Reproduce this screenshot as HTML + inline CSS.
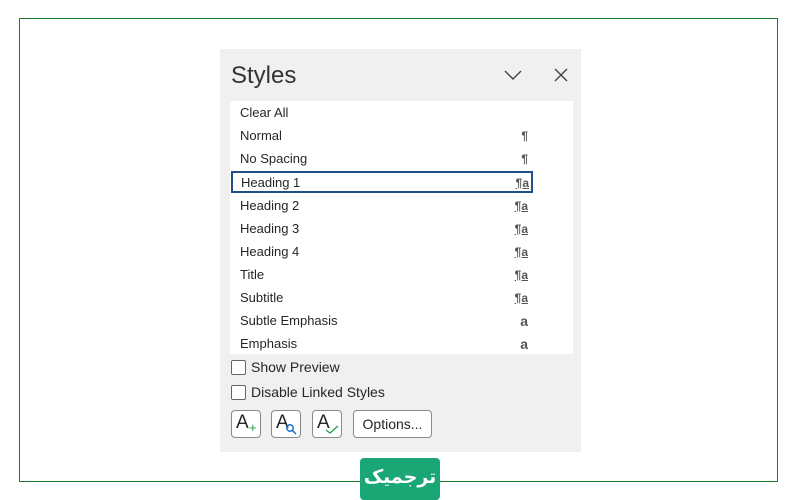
<!DOCTYPE html>
<html><head><meta charset="utf-8"><style>
*{margin:0;padding:0;box-sizing:border-box}
body{width:800px;height:500px;background:#fff;position:relative;overflow:hidden;font-family:"Segoe UI","Liberation Sans",sans-serif;color:#262626}
.frame{position:absolute;left:19px;top:18px;width:759px;height:464px;border:1.5px solid #1e7a2e}
.panel{position:absolute;left:220px;top:49px;width:361px;height:403px;background:#f0f0f0}
.title{position:absolute;left:11px;top:13px;font-size:24px;color:#333}
.list{position:absolute;left:10px;top:52px;width:343px;height:253px;background:#fff}
.row{position:absolute;left:0;height:23px;width:302px;font-size:13px;line-height:24px;padding-left:10px}
.row .m{position:absolute;right:4px;top:0;font-size:12px;color:#555;font-weight:bold}
.sel{border:2px solid #1f4e8c;left:1px;line-height:20px;padding-left:8px}
.cb{position:absolute;left:11px;width:15px;height:15px;border:1px solid #666;border-radius:2px;background:#fff}
.lbl{position:absolute;left:31px;font-size:14px}
.btn{position:absolute;top:361px;height:28px;border:1px solid #8a8a8a;border-radius:4px;background:#fff}
.logo{position:absolute;left:360px;top:458px;width:80px;height:42px;background:#1aa775;border-radius:4px;color:#fff;font-family:"DejaVu Sans",sans-serif;font-size:19px;font-weight:bold;text-align:center;line-height:38px;overflow:hidden;white-space:nowrap}
</style></head><body>
<div class="frame"></div>
<div class="panel">
<div class="title">Styles</div>
<svg style="position:absolute;left:284px;top:20px" width="18" height="12"><path d="M1 2 L9 10 L17 2" stroke="#444" stroke-width="1.4" fill="none"/></svg>
<svg style="position:absolute;left:334px;top:19px" width="14" height="14"><path d="M1 1L13 13M13 1L1 13" stroke="#444" stroke-width="1.4"/></svg>
<div class="list">
<div class="row" style="top:0">Clear All</div>
<div class="row" style="top:23px">Normal<span class="m">¶</span></div>
<div class="row" style="top:46px">No Spacing<span class="m">¶</span></div>
<div class="row sel" style="top:70px;height:22px">Heading 1<span class="m" style="right:2px;text-decoration:underline">¶a</span></div>
<div class="row" style="top:93px">Heading 2<span class="m" style="text-decoration:underline">¶a</span></div>
<div class="row" style="top:116px">Heading 3<span class="m" style="text-decoration:underline">¶a</span></div>
<div class="row" style="top:139px">Heading 4<span class="m" style="text-decoration:underline">¶a</span></div>
<div class="row" style="top:162px">Title<span class="m" style="text-decoration:underline">¶a</span></div>
<div class="row" style="top:185px">Subtitle<span class="m" style="text-decoration:underline">¶a</span></div>
<div class="row" style="top:208px">Subtle Emphasis<span class="m" style="font-size:14px">a</span></div>
<div class="row" style="top:231px">Emphasis<span class="m" style="font-size:14px">a</span></div>
</div>
<div class="cb" style="top:311px"></div><div class="lbl" style="top:310px">Show Preview</div>
<div class="cb" style="top:336px"></div><div class="lbl" style="top:335px">Disable Linked Styles</div>
<div class="btn" style="left:11px;width:30px"><span style="position:absolute;left:4px;top:1px;font-size:19px">A</span><span style="position:absolute;left:17px;top:9px;color:#1aa040;font-size:13px">+</span></div>
<div class="btn" style="left:51px;width:30px"><span style="position:absolute;left:4px;top:1px;font-size:19px">A</span><svg style="position:absolute;left:13px;top:12px" width="12" height="12"><circle cx="5" cy="5" r="3.2" stroke="#1a6fc9" stroke-width="1.5" fill="none"/><path d="M7.5 7.5L11 11" stroke="#1a6fc9" stroke-width="1.5"/></svg></div>
<div class="btn" style="left:92px;width:30px"><span style="position:absolute;left:4px;top:1px;font-size:19px">A</span><svg style="position:absolute;left:12px;top:14px" width="14" height="10"><path d="M1 5L5 8L13 1" stroke="#2aa050" stroke-width="1.4" fill="none"/></svg></div>
<div class="btn" style="left:133px;width:79px;font-size:14px;text-align:center;line-height:26px">Options...</div>
</div>
<div class="logo">ترجمیک</div>
</body></html>
